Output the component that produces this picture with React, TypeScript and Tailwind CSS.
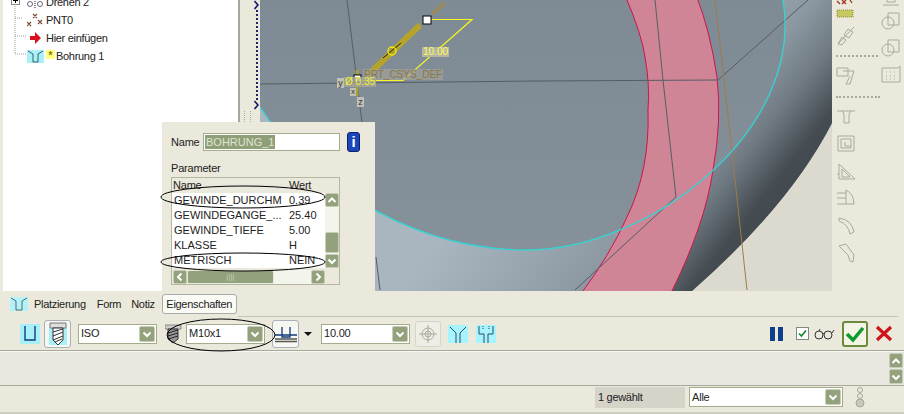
import type { ReactNode } from "react";

const font = "[font-family:'Liberation_Sans',Arial,sans-serif]";

function Chevron({ up = false, className = "" }: { up?: boolean; className?: string }) {
  return (
    <svg viewBox="0 0 10 10" className={className}>
      <path
        d={up ? "M1.5 7 L5 3.5 L8.5 7" : "M1.5 3.5 L5 7 L8.5 3.5"}
        fill="none"
        stroke="#fff"
        strokeWidth="2"
      />
    </svg>
  );
}

function OliveButton({ up = false, className = "" }: { up?: boolean; className?: string }) {
  return (
    <div className={`flex items-center justify-center rounded-[2px] border border-[#c7cdb6] bg-[#93a27d] ${className}`}>
      <Chevron up={up} className="w-[10px] h-[10px]" />
    </div>
  );
}

function Select({ value, className = "" }: { value: string; className?: string }) {
  return (
    <div className={`flex items-center justify-between bg-white border border-[#a5ac8e] h-[20px] pl-[2px] pr-[1px] ${className}`}>
      <span className="text-[11px] tracking-[-0.2px] text-[#222]">{value}</span>
      <OliveButton className="w-[16px] h-[16px]" />
    </div>
  );
}

function TreeRow({ icon, label, extra }: { icon: ReactNode; label: string; extra?: ReactNode }) {
  return (
    <div className="flex items-center h-[18px] pl-[24px]">
      <div className="w-[19px] h-[18px] flex items-center">{icon}</div>
      {extra}
      <span className="text-[11px] tracking-[-0.3px] text-[#222] leading-none">{label}</span>
    </div>
  );
}

function Tree() {
  return (
    <div className="relative w-[235px] ml-[3px] bg-white overflow-hidden">
      <svg className="absolute left-0 top-0" width="40" height="70">
        <path d="M12 0 V54 H24 M12 18 H20 M12 36 H24" stroke="#999" strokeDasharray="1 1" fill="none" />
        <rect x="8.5" y="-4.5" width="8" height="9" fill="#fff" stroke="#888" />
        <path d="M10 0.5 H15 M12.5 -2 V3" stroke="#000" />
      </svg>
      <div className="relative -mt-[7px]">
        <TreeRow
          label="Drehen 2"
          icon={
            <svg width="17" height="14" viewBox="0 0 17 14">
              <circle cx="3" cy="9" r="2.5" fill="none" stroke="#667" />
              <circle cx="13" cy="9" r="2.5" fill="none" stroke="#667" />
              <path d="M8 2 V14" stroke="#223" strokeDasharray="1 1" />
            </svg>
          }
        />
        <TreeRow
          label="PNT0"
          icon={
            <svg width="17" height="18" viewBox="0 0 17 18" stroke="#7a4a32" strokeWidth="1.2">
              <path d="M6 3 L10 7 M10 3 L6 7 M0 11 L4 15 M4 11 L0 15 M11 9 L15 13 M15 9 L11 13" />
            </svg>
          }
        />
        <TreeRow
          label="Hier einfügen"
          icon={
            <svg width="17" height="14" viewBox="0 0 17 14">
              <path d="M3 5 H8 V1 L14 7 L8 13 V9 H3 Z" fill="#d8121c" />
            </svg>
          }
        />
        <TreeRow
          label="Bohrung 1"
          extra={<span className="w-[9px] h-[9px] mr-[1px] -mt-[4px] text-[10px] leading-[11px] font-bold text-[#7a7a00] bg-[#ffff80] text-center">*</span>}
          icon={
            <svg width="17" height="13" viewBox="0 0 17 13">
              <rect x="0" y="0" width="17" height="13" fill="#aaf0f8" />
              <path d="M1 1 L6 4 V12 H11 V4 L16 1" fill="none" stroke="#35606a" />
            </svg>
          }
        />
      </div>
    </div>
  );
}

function SashArrow() {
  return (
    <svg width="5" height="10" viewBox="0 0 5 10" className="block mr-[1px]">
      <path d="M0.5 1 L4 5 L0.5 9" fill="none" stroke="#14146e" strokeWidth="1.6" />
    </svg>
  );
}

function Sash() {
  return (
    <div className="relative w-[22px] border-l-2 border-[#a7a69c] flex flex-col items-end">
      <SashArrow />
      <div className="w-0 h-[90px] mr-[2px] border-l-2 border-dotted border-[#22226a]" />
      <SashArrow />
      <div className="w-[7px] h-[15px] mr-[9px] mt-[1px] border-x border-dotted border-[#aaa]" />
    </div>
  );
}

function Canvas() {
  return (
    <div className="relative w-[572px] h-[291px] overflow-hidden bg-[#dcdacf]">
      <svg className="absolute inset-0" width="572" height="291" viewBox="260 0 572 291">
        <defs>
          <linearGradient id="shade" gradientUnits="userSpaceOnUse" x1="560" y1="90" x2="760" y2="250">
            <stop offset="0" stopColor="#a9b6c0" />
            <stop offset="0.55" stopColor="#8d99a2" />
            <stop offset="0.72" stopColor="#6f7a82" />
            <stop offset="0.88" stopColor="#454d52" />
            <stop offset="1" stopColor="#3f474c" />
          </linearGradient>
          <linearGradient id="top" x1="0" y1="0" x2="0" y2="1">
            <stop offset="0" stopColor="#7e8a94" />
            <stop offset="1" stopColor="#87929b" />
          </linearGradient>
        </defs>
        <path d="M260 0 H832 V123 Q790 205 692 291 H260 Z" fill="url(#top)" />
        <path
          d="M260 107 C300 170 400 250 527 250 C650 250 805 130 783 0 H832 V123 Q790 205 692 291 H260 Z"
          fill="url(#shade)"
        />
        <path
          d="M625 -5 Q642 35 645 57 Q650 85 648 110 Q650 170 627 217 Q610 255 580 295 H670 Q705 225 713 170 Q722 120 717 77 Q710 30 696 -5 Z"
          fill="#cf8595"
          stroke="#d0144a"
        />
        <path d="M260 84 L537 81 L718 80 L808 0" fill="none" stroke="#555e66" />
        <path d="M655 0 L663 80 L676 197 L575 290" fill="none" stroke="#555e66" />
        <path d="M376 257 L380 290" stroke="#555e66" />
        <path d="M715 0 Q722 60 747 290" fill="none" stroke="#a07a4a" />
        <path d="M347 0 L362 123" stroke="#555e66" />
        <path d="M260 107 C300 170 400 250 527 250 C650 250 805 130 783 0" fill="none" stroke="#35d4d4" strokeWidth="1.3" />
        <path d="M368 75 L420 25" stroke="#b5a32a" strokeWidth="6" />
        <path d="M432 14 L445 3" stroke="#9c8a58" strokeWidth="3" />
        <path d="M383 58 L401 43" stroke="#222" />
        <circle cx="392" cy="51" r="4" fill="none" stroke="#f0f000" strokeWidth="1.3" />
        <path d="M427 19.5 H472 L403 80.5 H357" fill="none" stroke="#f8f820" strokeWidth="1.2" />
        <path d="M357 70 V96" stroke="#a8a030" strokeWidth="3" />
        <rect x="423" y="16" width="8" height="8" fill="#fff" stroke="#000" />
        <rect x="354" y="75" width="7" height="7" fill="#fff" stroke="#000" />
      </svg>
      <span className="absolute left-[162px] top-[47px] w-[27px] h-[10px] bg-[#b5b5a5] text-center text-[10px] leading-[10px] text-[#ffff50]">10.00</span>
      <span className="absolute left-[103px] top-[69px] px-[1px] h-[11px] bg-[#a3a399]/70 text-[10px] leading-[11px] text-[#8a7648] whitespace-nowrap">PRT_CSYS_DEF</span>
      <span className="absolute left-[84px] top-[77px] px-[1px] h-[10px] bg-[#a8a89a]/80 text-[10px] leading-[10px] text-[#f0f030] whitespace-nowrap">Ø 0.35</span>
      <span className="absolute left-[77px] top-[78px] w-[7px] h-[10px] bg-[#c0c0b4] text-center text-[9px] leading-[10px] text-[#333]">y</span>
      <span className="absolute left-[90px] top-[88px] w-[6px] h-[8px] bg-[#c0c0b4] text-center text-[8px] leading-[8px] text-[#333]">x</span>
      <span className="absolute left-[97px] top-[97px] w-[7px] h-[10px] bg-[#c0c0b4] text-center text-[9px] leading-[10px] text-[#333]">z</span>
    </div>
  );
}

function ToolIcon({ d, h, mt, children }: { d?: string; h: number; mt: number; children?: ReactNode }) {
  return (
    <svg width="20" height={h} viewBox={`0 0 20 ${h}`} style={{ marginTop: mt }} fill="none" stroke="#aaa99d" className="block">
      {d && <path d={d} />}
      {children}
    </svg>
  );
}

function RightToolbar() {
  return (
    <div className="flex-1 flex bg-[#ebe9dc] pl-[4px] overflow-hidden">
      <div className="w-[44px] flex flex-col">
        <svg width="18" height="18" viewBox="0 0 18 18" className="block">
          <path d="M6 0 L10 4 M10 0 L6 4 M1 1 L4 4 M14 0 L16 3" stroke="#a03020" strokeWidth="1.3" />
          <rect x="1" y="10" width="16" height="7" fill="#c8c860" stroke="#8a8a40" strokeDasharray="1 1" />
        </svg>
        <ToolIcon h={20} mt={8} d="M2 18 L6 11 L10 14 L6 19 Z M8 9 L12 3 L17 6 L13 12 Z M2 18 L18 1" />
        <div className="mt-[9px] w-[42px] border-t-2 border-dotted border-[#aaa99d]" />
        <ToolIcon h={18} mt={10} d="M1 1 H12 V9 H1 Z M7 4 H18 L14 17 H10 M14 9 L10 17" />
        <div className="mt-[11px] w-[44px] border-t-2 border-dotted border-[#aaa99d]" />
        <ToolIcon h={14} mt={12} d="M1 1 H19 M6 1 Q8 3 8 5 V13 H13 V5 Q13 3 15 1" />
        <ToolIcon h={18} mt={10} d="M2 2 H18 V17 H2 Z M5 5 H15 V14 H5 Z M9 8 V12 H15" />
        <ToolIcon h={20} mt={9} d="M3 3 L19 18 H3 Z M6 8 L14 16 H6 Z M1 14 L3 12" />
        <ToolIcon h={18} mt={8} d="M1 4 H10 M1 9 H10 M1 15 H18 M10 1 Q18 5 18 15 M10 1 V15" />
        <ToolIcon h={20} mt={8} d="M3 3 Q16 5 18 17 L14 19 Q12 9 3 6 Z" />
        <ToolIcon h={20} mt={8} d="M3 3 L10 1 L18 12 L17 19 L14 18 L12 12 Z" />
      </div>
      <div className="flex flex-col pl-[1px]">
        <ToolIcon h={7} mt={0} d="M6 0 V2 H14 V0 M2 5 H18" />
        <ToolIcon h={18} mt={5} d="M7 1 H18 V13 H7 Z">
          <circle cx="7" cy="11" r="6" />
        </ToolIcon>
        <ToolIcon h={18} mt={9} d="M7 1 H18 V13 H7 Z">
          <circle cx="7" cy="11" r="6" />
        </ToolIcon>
        <ToolIcon h={19} mt={8} d="M1 3 H17 L19 1 V17 H1 Z">
          <path d="M5 7 H7 M9 7 H11 M13 7 H15 M5 11 H7 M9 11 H11 M13 11 H15 M5 14 H7 M9 14 H11 M13 14 H15" strokeDasharray="1 1" />
        </ToolIcon>
      </div>
    </div>
  );
}

function HoleIcon() {
  return (
    <svg width="18" height="16" viewBox="0 0 18 16">
      <rect width="18" height="14" y="1" fill="#b4f2f8" />
      <path d="M1 2 L6 5 V14 H12 V5 L17 2" fill="none" stroke="#4a6a72" />
    </svg>
  );
}

function TabsRow() {
  return (
    <div className="h-[25px] flex items-center pl-[10px] pt-[1px] text-[11px] tracking-[-0.3px] text-[#222]">
      <HoleIcon />
      <span className="ml-[6px]">Platzierung</span>
      <span className="ml-[11px]">Form</span>
      <span className="ml-[10px]">Notiz</span>
      <div className="ml-[7px] w-[75px] h-[20px] flex items-center justify-center bg-[#fbfbf6] border border-[#a9aca6] rounded-[3px]">Eigenschaften</div>
    </div>
  );
}

function ThreadGlyph({ cyan = false }: { cyan?: boolean }) {
  return (
    <svg width="18" height="24" viewBox="0 0 18 24">
      {cyan && <rect x="0" y="6" width="18" height="17" fill="#a8f0f8" />}
      <path d="M1 1 H17 V6 H1 Z" fill="#ddd" stroke="#777" />
      <path d="M4 6 V18 L9 23 L14 18 V6 Z" fill="#fff" stroke="#333" />
      <path d="M4 10 L14 7 M4 14 L14 10 M4 18 L14 14 M6 20 L13 17" stroke="#333" />
    </svg>
  );
}

function Toolbar() {
  return (
    <div className="h-[34px] border-b border-[#a9a89c] flex items-center text-[#222]">
      <svg width="20" height="20" viewBox="0 0 20 20" className="ml-[20px]">
        <rect width="20" height="20" fill="#a8f0f8" />
        <path d="M5 2 V16 H15 V2" fill="none" stroke="#143a7c" strokeWidth="1.4" />
      </svg>
      <div className="ml-[4px] w-[27px] h-[28px] flex justify-center items-center bg-[#f7f7f1] border border-[#aab0bb] rounded-[3px]">
        <ThreadGlyph cyan />
      </div>
      <Select value="ISO" className="ml-[7px] w-[79px]" />
      <div className="ml-[8px] w-[21px]">
        <svg width="17" height="20" viewBox="0 0 17 20">
          <path d="M0 1 H16 V5 H0 Z" fill="#ccc" stroke="#888" />
          <path d="M3 5 V15 L8 19 L13 15 V5 Z" fill="#999" stroke="#333" />
          <path d="M3 9 L13 6 M3 12 L13 9 M3 15 L13 12" stroke="#222" />
        </svg>
      </div>
      <Select value="M10x1" className="w-[79px]" />
      <div className="ml-[7px] w-[27px] h-[28px] flex justify-center items-center bg-[#f7f7f1] border border-[#aab0bb] rounded-[3px]">
        <svg width="22" height="20" viewBox="0 0 22 20" fill="none" stroke="#143a7c" strokeWidth="1.3">
          <path d="M7 3 V13 H15 V3 M0 11 H22" />
          <path d="M0 15 H22 M0 17.5 H22" stroke="#555" />
        </svg>
      </div>
      <svg width="8" height="6" viewBox="0 0 8 6" className="ml-[5px]">
        <path d="M0 1 H8 L4 5 Z" fill="#111" />
      </svg>
      <Select value="10.00" className="ml-[9px] w-[89px]" />
      <div className="ml-[5px] w-[26px] h-[26px] flex items-center justify-center bg-[#efeee4] border border-[#d6d5cb] rounded-[3px]">
        <svg width="20" height="20" viewBox="0 0 20 20" fill="none" stroke="#aaa99d">
          <circle cx="10" cy="10" r="6" />
          <circle cx="10" cy="10" r="3" />
          <path d="M10 1 V19 M1 10 H19" />
        </svg>
      </div>
      <svg width="20" height="18" viewBox="0 0 20 18" fill="none" stroke="#2a4a68" className="ml-[7px]">
        <rect width="20" height="18" fill="#a8f4fc" stroke="none" />
        <path d="M2 2 L8 8 V18 M18 2 L12 8 V18" />
      </svg>
      <svg width="20" height="18" viewBox="0 0 20 18" fill="none" stroke="#2a4a68" className="ml-[8px]">
        <rect width="20" height="18" fill="#a8f4fc" stroke="none" />
        <path d="M3 1 V9 H8 V18 M17 1 V9 H12 V18" />
        <path d="M7 1 V5 M13 1 V5" strokeDasharray="1 1" />
      </svg>
      <div className="ml-auto flex items-center">
        <div className="flex gap-[3px]">
          <div className="w-[5px] h-[14px] bg-[#0f3f8c]" />
          <div className="w-[5px] h-[14px] bg-[#0f3f8c]" />
        </div>
        <div className="ml-[13px] w-[13px] h-[13px] bg-white border border-[#7f8a80] flex items-center justify-center">
          <svg width="9" height="9" viewBox="0 0 9 9">
            <path d="M1 4.5 L3.5 7 L8 1.5" fill="none" stroke="#1a8a2a" strokeWidth="1.7" />
          </svg>
        </div>
        <svg width="21" height="12" viewBox="0 0 21 12" fill="none" stroke="#333" className="ml-[5px]">
          <circle cx="5" cy="7" r="4" />
          <circle cx="14" cy="7" r="4" />
          <path d="M9 6 Q9.5 5 10 6 M18 5 L20 2 M5 3 L6 1" />
        </svg>
        <div className="ml-[7px] w-[26px] h-[26px] flex items-center justify-center bg-[#f3f3e6] border-2 border-[#6c8a3c] rounded-[3px]">
          <svg width="20" height="18" viewBox="0 0 20 18">
            <path d="M2 9 L8 15 L18 3" fill="none" stroke="#0e9a2c" strokeWidth="3.5" />
          </svg>
        </div>
        <svg width="18" height="17" viewBox="0 0 18 17" className="ml-[7px] mr-[11px]">
          <path d="M2 2 L16 15 M16 2 L2 15" stroke="#d0121c" strokeWidth="3.2" />
        </svg>
      </div>
    </div>
  );
}

function MessageRow() {
  return (
    <div className="h-[35px] border-t border-[#f8f8f2] flex justify-end bg-[#e9e8e0] border-b-[#a9a89c] border-b">
      <div className="w-[14px] mr-[1px] flex flex-col gap-[1px] justify-center">
        <OliveButton up className="w-[14px] h-[15px]" />
        <OliveButton className="w-[14px] h-[15px]" />
      </div>
    </div>
  );
}

function StatusRow() {
  return (
    <div className="flex-1 flex items-start pt-[1px] pl-[595px] border-b-2 border-[#cfcec2]">
      <div className="w-[90px] h-[21px] pl-[3px] flex items-center bg-[#d6d4c9] text-[11px] tracking-[-0.3px] text-[#222]">1 gewählt</div>
      <Select value="Alle" className="ml-[4px] w-[154px]" />
      <svg width="10" height="22" viewBox="0 0 10 22" fill="none" stroke="#a8a79c" className="ml-[12px]">
        <circle cx="5" cy="3" r="2.5" />
        <circle cx="5" cy="9" r="2.5" />
        <circle cx="5" cy="16" r="4" fill="#c8c7bc" />
      </svg>
    </div>
  );
}

function Dialog() {
  const rows = [
    ["GEWINDE_DURCHM", "0.39"],
    ["GEWINDEGANGE_...", "25.40"],
    ["GEWINDE_TIEFE", "5.00"],
    ["KLASSE", "H"],
    ["METRISCH", "NEIN"],
  ];
  return (
    <div className="absolute left-[162px] top-[122px] w-[213px] h-[169px] bg-[#ebe9dc] text-[11px] text-[#222] pl-[9px] pt-[10px]">
      <div className="flex items-center h-[20px]">
        <span className="w-[32px] tracking-[-0.2px]">Name</span>
        <div className="w-[137px] h-[18px] bg-white border border-[#a5ac8e] flex items-center pl-[1px]">
          <span className="bg-[#8f9f78] text-[#dfe4cf] leading-[14px] px-[1px]">BOHRUNG_1</span>
        </div>
        <div className="ml-[7px] w-[13px] h-[20px] rounded-[3px] bg-[#1c46b8] border border-[#0c2070] text-white text-[15px] font-bold leading-[18px] text-center">i</div>
      </div>
      <div className="mt-[9px] h-[15px] leading-[15px] tracking-[-0.2px]">Parameter</div>
      <div className="mt-[1px] w-[169px] h-[108px] border border-[#b4b8a2] relative">
        <div className="flex h-[15px] leading-[15px] pl-[1px] tracking-[-0.2px]">
          <span className="w-[116px]">Name</span>
          <span>Wert</span>
        </div>
        <div className="flex">
          <div className="w-[153px] h-[75px] bg-white">
            {rows.map(([k, v]) => (
              <div key={k} className="flex h-[15px] leading-[15px] pl-[2px] whitespace-nowrap overflow-hidden">
                <span className="w-[115px]">{k}</span>
                <span>{v}</span>
              </div>
            ))}
          </div>
          <div className="w-[14px] h-[75px] bg-[#f3f4ec] flex flex-col">
            <OliveButton up className="w-[14px] h-[14px]" />
            <div className="flex-1 flex flex-col justify-end">
              <div className="h-[21px] bg-[#93a27d] border border-[#c7cdb6] rounded-[2px] mb-[1px]" />
            </div>
            <OliveButton className="w-[14px] h-[14px]" />
          </div>
        </div>
        <div className="mt-[2px] ml-[1px] w-[152px] h-[14px] flex bg-[#f3f4ec]">
          <OliveButton className="w-[14px] h-[14px] rotate-90" />
          <div className="w-[87px] h-[14px] bg-[#93a27d] border border-[#e8ebdd] rounded-[2px] flex items-center justify-center text-[8px] leading-none text-[#c7cdb6]">||||</div>
          <div className="flex-1" />
          <OliveButton className="w-[14px] h-[14px] -rotate-90" />
        </div>
      </div>
    </div>
  );
}

export default function App() {
  return (
    <div className={`relative w-[904px] h-[414px] overflow-hidden flex flex-col bg-[#ebe9dc] ${font}`}>
      <div className="flex h-[291px]">
        <Tree />
        <Sash />
        <Canvas />
        <RightToolbar />
      </div>
      <TabsRow />
      <div className="ml-[238px] mr-[6px] h-px bg-[#c4c3b6]" />
      <Toolbar />
      <MessageRow />
      <StatusRow />
      <Dialog />
      {/* hand-drawn marks over the screenshot */}
      <svg className="absolute inset-0 pointer-events-none" width="904" height="414" fill="none" stroke="#000">
        <ellipse cx="243" cy="197" rx="82" ry="11" />
        <ellipse cx="243" cy="262" rx="82" ry="9" />
        <ellipse cx="221" cy="335" rx="54" ry="16" />
      </svg>
    </div>
  );
}
